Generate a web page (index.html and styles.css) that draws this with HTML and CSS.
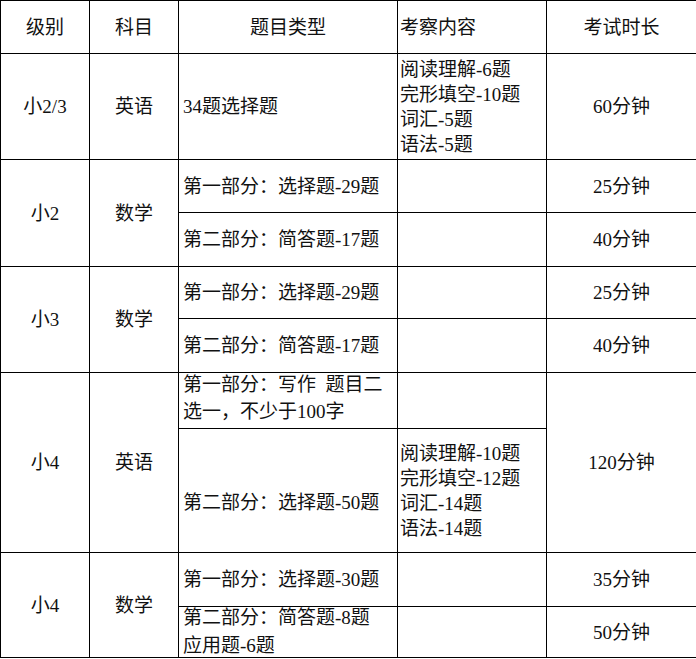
FILE: index.html
```html
<!DOCTYPE html>
<html lang="zh-CN">
<head>
<meta charset="utf-8">
<title>考试安排</title>
<link rel="stylesheet" href="styles.css">
</head>
<body>
<table class="exam">
  <colgroup>
    <col class="c-level">
    <col class="c-subject">
    <col class="c-type">
    <col class="c-content">
    <col class="c-time">
  </colgroup>
  <tr class="r-head">
    <td class="mid">级别</td>
    <td class="mid">科目</td>
    <td class="mid">题目类型</td>
    <td class="left-c">考察内容</td>
    <td class="mid">考试时长</td>
  </tr>
  <tr class="r-106">
    <td class="mid">小2/3</td>
    <td class="mid">英语</td>
    <td class="left-t">34题选择题</td>
    <td class="left-c">阅读理解-6题<br>完形填空-10题<br>词汇-5题<br>语法-5题</td>
    <td class="mid">60分钟</td>
  </tr>
  <tr class="r-53">
    <td class="mid" rowspan="2">小2</td>
    <td class="mid" rowspan="2">数学</td>
    <td class="left-t">第一部分：选择题-29题</td>
    <td class="left-c"></td>
    <td class="mid">25分钟</td>
  </tr>
  <tr class="r-54">
    <td class="left-t">第二部分：简答题-17题</td>
    <td class="left-c"></td>
    <td class="mid">40分钟</td>
  </tr>
  <tr class="r-52">
    <td class="mid" rowspan="2">小3</td>
    <td class="mid" rowspan="2">数学</td>
    <td class="left-t">第一部分：选择题-29题</td>
    <td class="left-c"></td>
    <td class="mid">25分钟</td>
  </tr>
  <tr class="r-54">
    <td class="left-t">第二部分：简答题-17题</td>
    <td class="left-c"></td>
    <td class="mid">40分钟</td>
  </tr>
  <tr class="r-56">
    <td class="mid" rowspan="2">小4</td>
    <td class="mid" rowspan="2">英语</td>
    <td class="left-t"><div class="two-a">第一部分：写作&ensp;题目二<br>选一，不少于100字</div></td>
    <td class="left-c"></td>
    <td class="mid" rowspan="2">120分钟</td>
  </tr>
  <tr class="r-124">
    <td class="left-t shift">第二部分：选择题-50题</td>
    <td class="left-c">阅读理解-10题<br>完形填空-12题<br>词汇-14题<br>语法-14题</td>
  </tr>
  <tr class="r-54">
    <td class="mid" rowspan="2">小4</td>
    <td class="mid" rowspan="2">数学</td>
    <td class="left-t">第一部分：选择题-30题</td>
    <td class="left-c"></td>
    <td class="mid">35分钟</td>
  </tr>
  <tr class="r-51">
    <td class="left-t"><div class="two-b">第二部分：简答题-8题<br>应用题-6题</div></td>
    <td class="left-c"></td>
    <td class="mid">50分钟</td>
  </tr>
</table>
</body>
</html>
```
FILE: styles.css
```css
html, body {
  margin: 0;
  padding: 0;
  background: #ffffff;
}

.exam {
  border-collapse: collapse;
  table-layout: fixed;
  width: 696px;
  font-family: "Liberation Serif", "Noto Sans CJK SC", serif;
  font-size: 19px;
  color: #111111;
}

.c-level { width: 89px; }
.c-subject { width: 89px; }
.c-type { width: 219px; }
.c-content { width: 149px; }
.c-time { width: 150px; }

.exam td {
  border: 1px solid #000000;
  padding: 0;
  vertical-align: middle;
  white-space: nowrap;
  line-height: 25px;
}

.mid { text-align: center; }
.exam td.left-t { text-align: left; padding-left: 4px; }
.exam td.left-c { text-align: left; padding-left: 2px; }
.exam td.shift { padding-top: 24px; }

.two-a {
  line-height: 27px;
  margin-top: -6px;
}

.two-b {
  line-height: 28px;
  margin: -6px 0;
}

.r-head { height: 53px; }
.r-106 { height: 106px; }
.r-53 { height: 53px; }
.r-54 { height: 54px; }
.r-52 { height: 52px; }
.r-56 { height: 56px; }
.r-124 { height: 124px; }
.r-51 { height: 51px; }
```
